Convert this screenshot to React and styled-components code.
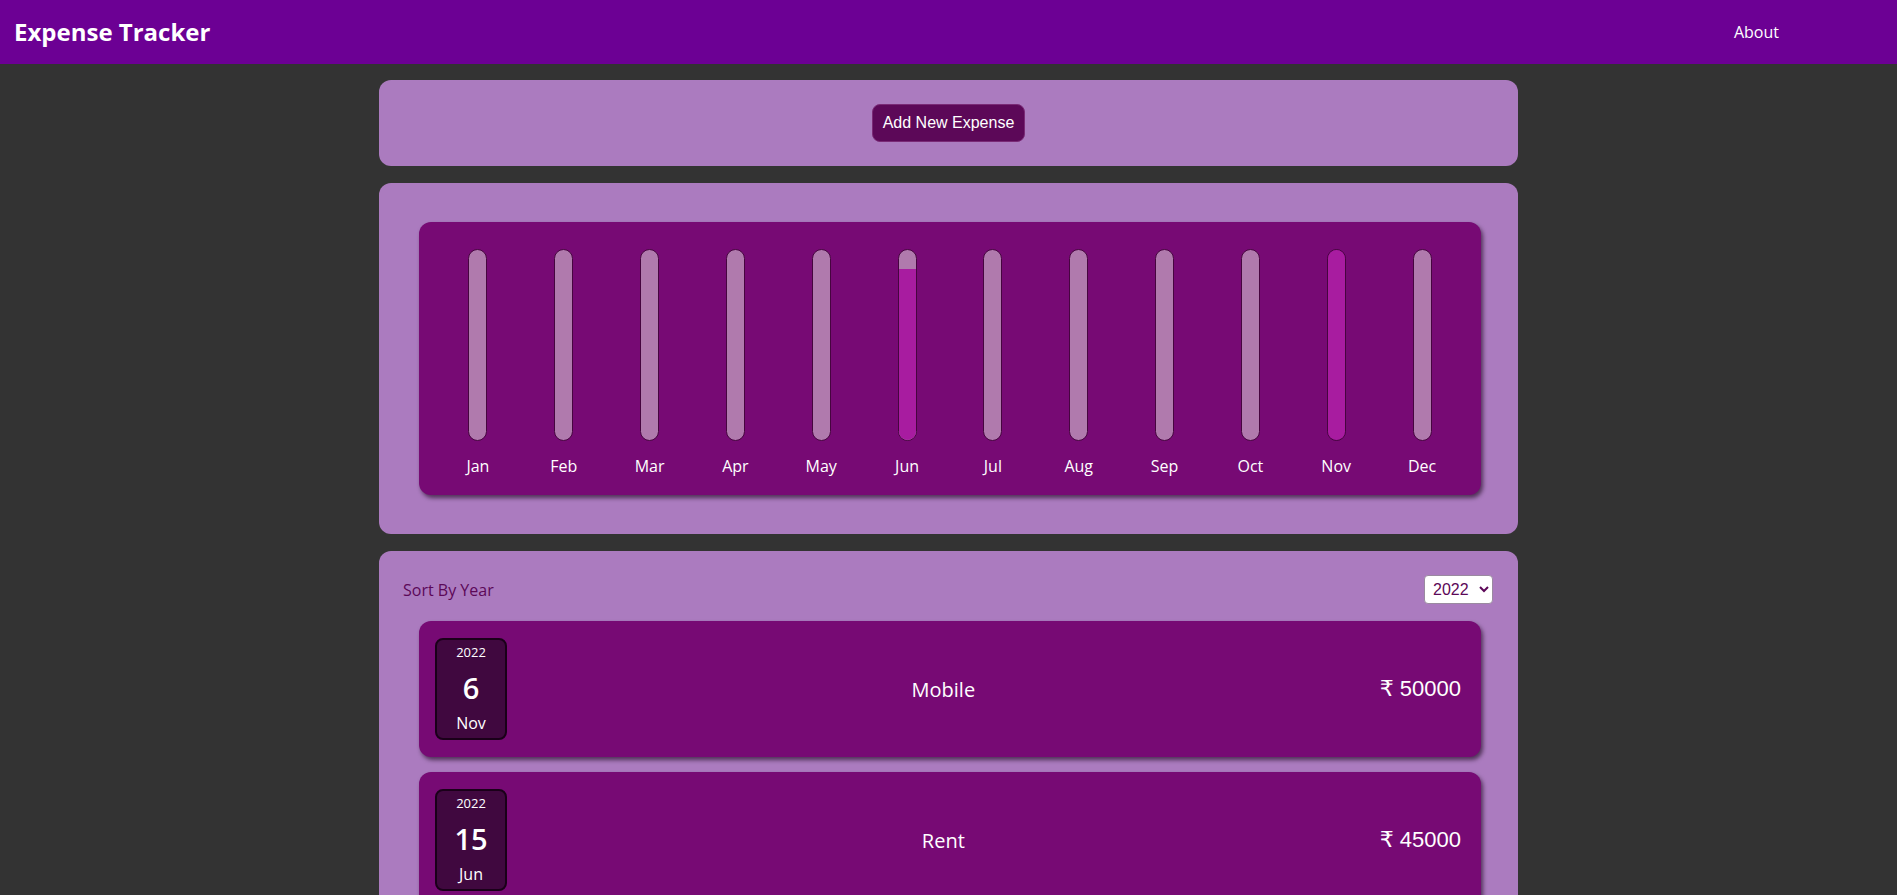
import React, { useState } from "react";
import styled, { createGlobalStyle } from "styled-components";

const GlobalStyle = createGlobalStyle`
  * { box-sizing: border-box; }
  body {
    margin: 0;
    background: #333333;
    font-family: "Open Sans", "Noto Sans", sans-serif;
  }
`;

const MONTHS = ["Jan", "Feb", "Mar", "Apr", "May", "Jun", "Jul", "Aug", "Sep", "Oct", "Nov", "Dec"];

const expenses = [
  { id: 1, title: "Mobile", amount: 50000, date: new Date(2022, 10, 6) },
  { id: 2, title: "Rent", amount: 45000, date: new Date(2022, 5, 15) },
];

const App = () => {
  const [year, setYear] = useState("2022");

  const filtered = expenses.filter((e) => String(e.date.getFullYear()) === year);

  // monthly totals for the chart
  const totals = MONTHS.map((_, i) =>
    filtered.filter((e) => e.date.getMonth() === i).reduce((s, e) => s + e.amount, 0)
  );
  const max = Math.max(...totals, 1);

  return (
    <>
      <GlobalStyle />
      <Nav>
        <Brand>Expense Tracker</Brand>
        <NavLink>About</NavLink>
      </Nav>

      <Main>
        <Card $pad="24px">
          <Centered>
            <AddBtn type="button">Add New Expense</AddBtn>
          </Centered>
        </Card>

        <Card $pad="39px 37px 39px 40px">
          <Chart>
            {MONTHS.map((m, i) => (
              <BarCol key={m}>
                <BarTrack>
                  <BarFill style={{ height: `${(totals[i] / max) * 100}%` }} />
                </BarTrack>
                <BarLabel>{m}</BarLabel>
              </BarCol>
            ))}
          </Chart>
        </Card>

        <Card $pad="24px 25px 24px 24px">
          <FilterRow>
            <FilterLabel>Sort By Year</FilterLabel>
            <YearSelect value={year} onChange={(e) => setYear(e.target.value)}>
              <option value="2022">2022</option>
              <option value="2021">2021</option>
              <option value="2020">2020</option>
              <option value="2019">2019</option>
            </YearSelect>
          </FilterRow>

          <List>
            {filtered.map((e) => (
              <Item key={e.id}>
                <DateBox>
                  <DateYear>{e.date.getFullYear()}</DateYear>
                  <DateDay>{e.date.getDate()}</DateDay>
                  <DateMonth>{MONTHS[e.date.getMonth()]}</DateMonth>
                </DateBox>
                <ItemTitle>{e.title}</ItemTitle>
                <Amount>₹ {e.amount}</Amount>
              </Item>
            ))}
          </List>
        </Card>
      </Main>
    </>
  );
};

export default App;

const Nav = styled.nav`
  height: 64px;
  background: #6c0094;
  display: flex;
  align-items: center;
  justify-content: space-between;
  padding: 0 118px 0 14px;
`;
const Brand = styled.div`
  color: #ffffff;
  font-size: 24px;
  font-weight: 700;
  margin-top: -2px;
`;
const NavLink = styled.a`
  color: #ffffff;
  font-size: 16px;
  font-weight: 500;
  margin-top: -1px;
  cursor: pointer;
`;
const Main = styled.main`
  width: 1139px;
  margin: 16px auto 0;
  display: flex;
  flex-direction: column;
  gap: 17px;
`;
const Card = styled.section`
  background: #ab7bbf;
  border-radius: 12px;
  padding: ${(p) => p.$pad};
`;
const Centered = styled.div`
  display: flex;
  justify-content: center;
`;
const AddBtn = styled.button`
  height: 38px;
  padding: 0 10px;
  background: #5c0858;
  color: #ffffff;
  border: 1px solid #7a2a76;
  border-radius: 8px;
  font-family: "Liberation Sans", Arial, sans-serif;
  font-size: 16px;
  cursor: pointer;
`;
const Chart = styled.div`
  background: #770a74;
  border-radius: 12px;
  padding: 27px 16px 17px;
  display: flex;
  box-shadow: 2px 3px 4px rgba(20, 0, 20, 0.6);
`;
const BarCol = styled.div`
  flex: 1;
  display: flex;
  flex-direction: column;
  align-items: center;
`;
const BarTrack = styled.div`
  width: 19px;
  height: 192px;
  border: 1px solid #46053f;
  border-radius: 12px;
  background: #b07aad;
  overflow: hidden;
  display: flex;
  flex-direction: column;
  justify-content: flex-end;
`;
const BarFill = styled.div`
  width: 100%;
  background: #a81ca0;
`;
const BarLabel = styled.div`
  margin-top: 13px;
  line-height: 24px;
  font-size: 16px;
  color: #ffffff;
`;
const FilterRow = styled.div`
  display: flex;
  align-items: center;
  justify-content: space-between;
  height: 29px;
`;
const FilterLabel = styled.div`
  color: #5c0858;
  font-size: 16px;
`;
const YearSelect = styled.select`
  width: 69px;
  height: 29px;
  border: 1px solid #9a8aa0;
  border-radius: 4px;
  background: #ffffff;
  color: #5c0858;
  font-family: "Liberation Sans", Arial, sans-serif;
  font-size: 16px;
  padding: 0 4px;
`;
const List = styled.ul`
  list-style: none;
  margin: 17px 0 0;
  padding: 0 12px 0 16px;
  display: flex;
  flex-direction: column;
  gap: 15px;
`;
const Item = styled.li`
  background: #770a74;
  border-radius: 12px;
  padding: 17px 20px 17px 16px;
  display: flex;
  align-items: center;
  box-shadow: 2px 3px 4px rgba(20, 0, 20, 0.6);
`;
const DateBox = styled.div`
  width: 72px;
  height: 102px;
  background: #40083f;
  border: 2px solid #1a0019;
  border-radius: 8px;
  color: #ffffff;
  display: flex;
  flex-direction: column;
  align-items: center;
  padding-top: 3px;
`;
const DateYear = styled.div`
  font-size: 13px;
  line-height: 18px;
`;
const DateDay = styled.div`
  margin-top: 10px;
  font-size: 29px;
  font-weight: 600;
  line-height: 34px;
`;
const DateMonth = styled.div`
  margin-top: 7px;
  font-size: 16px;
  line-height: 22px;
`;
const ItemTitle = styled.div`
  flex: 1;
  text-align: center;
  color: #ffffff;
  font-size: 20px;
`;
const Amount = styled.div`
  color: #ffffff;
  font-family: "Liberation Sans", Arial, "DejaVu Sans", sans-serif;
  font-size: 22px;
`;
